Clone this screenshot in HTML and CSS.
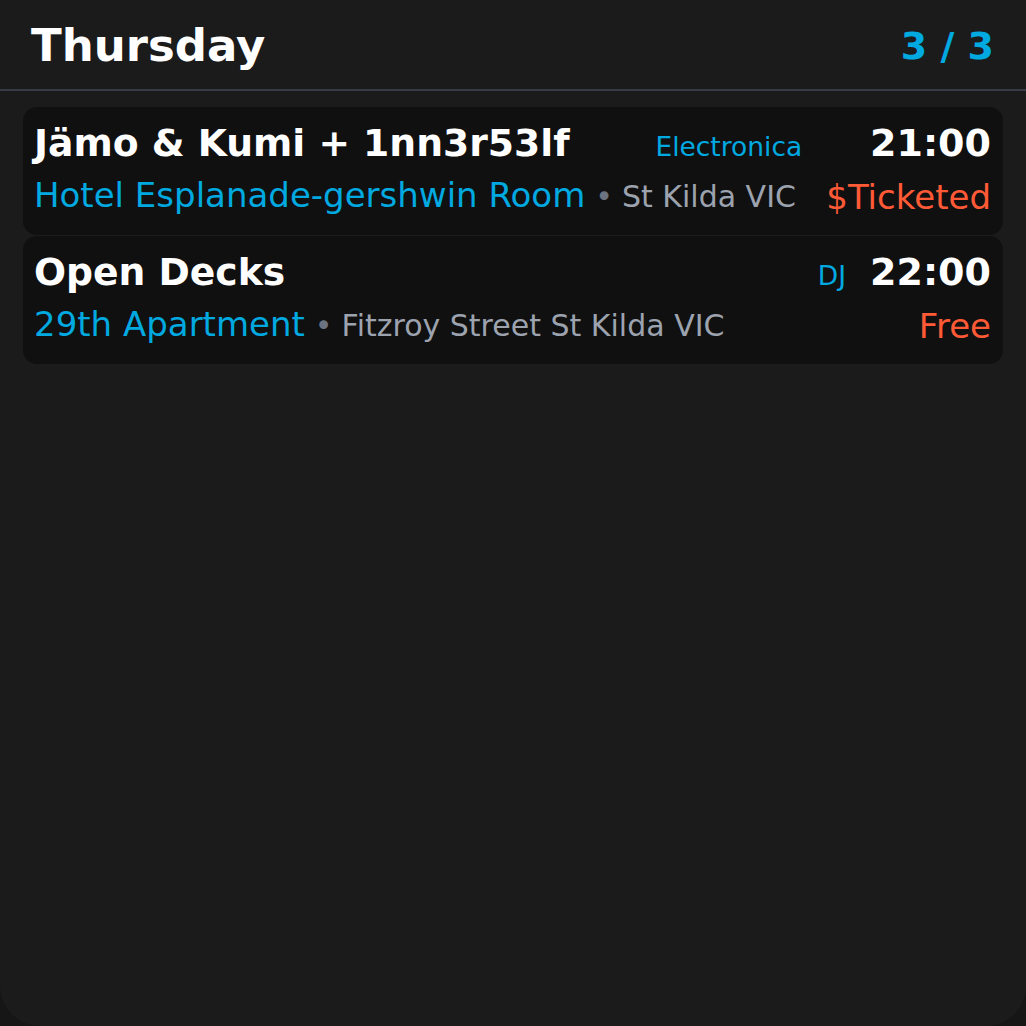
FILE: index.html
```html
<!DOCTYPE html>
<html lang="en">
<head>
<meta charset="utf-8">
<title>Thursday</title>
<link rel="stylesheet" href="styles.css">
</head>
<body>
<div class="panel">
  <header class="header">
    <h1 class="day">Thursday</h1>
    <div class="count">3 / 3</div>
  </header>
  <div class="list">
    <div class="card">
      <div class="main">
        <div class="row-top">
          <span class="title">Jämo &amp; Kumi + 1nn3r53lf</span>
          <span class="genre">Electronica</span>
        </div>
        <div class="row-bottom">
          <span class="venue">Hotel Esplanade-gershwin Room</span>
          <span class="dot">•</span>
          <span class="place">St Kilda VIC</span>
        </div>
      </div>
      <div class="side">
        <span class="time">21:00</span>
        <span class="price">$Ticketed</span>
      </div>
    </div>
    <div class="card">
      <div class="main">
        <div class="row-top">
          <span class="title">Open Decks</span>
          <span class="genre">DJ</span>
        </div>
        <div class="row-bottom">
          <span class="venue">29th Apartment</span>
          <span class="dot">•</span>
          <span class="place">Fitzroy Street St Kilda VIC</span>
        </div>
      </div>
      <div class="side">
        <span class="time">22:00</span>
        <span class="price">Free</span>
      </div>
    </div>
  </div>
</div>
</body>
</html>
```

FILE: styles.css
```css
* { box-sizing: border-box; }
html, body {
  margin: 0;
  padding: 0;
  background: #161616;
}
body {
  font-family: "DejaVu Sans", "Liberation Sans", sans-serif;
  color: #ffffff;
}
.panel {
  width: 1026px;
  height: 1026px;
  background: #1b1b1b;
  border-radius: 0 0 40px 40px;
  overflow: hidden;
}
.header {
  height: 91px;
  display: flex;
  align-items: center;
  justify-content: space-between;
  padding: 2px 32px 0 31px;
  border-bottom: 2px solid #373b45;
}
.day {
  margin: 0;
  font-size: 45px;
  font-weight: 700;
  color: #ffffff;
}
.count {
  font-size: 38px;
  font-weight: 700;
  color: #00a9e0;
}
.list {
  padding: 16px 23px;
  display: flex;
  flex-direction: column;
  gap: 1px;
}
.card {
  background: #101010;
  border-radius: 14px;
  padding: 14px 12px 18px 11px;
  display: flex;
  gap: 24px;
}
.main {
  flex: 1;
  min-width: 0;
  display: flex;
  flex-direction: column;
}
.row-top {
  display: flex;
  justify-content: space-between;
  align-items: baseline;
}
.row-bottom {
  display: flex;
  align-items: baseline;
  margin-top: 10px;
  white-space: nowrap;
}
.title {
  font-size: 37.7px;
  font-weight: 700;
  color: #ffffff;
}
.genre {
  font-size: 26.5px;
  color: #00a9e0;
}
.venue {
  font-size: 34px;
  color: #00a9e0;
}
.dot {
  font-size: 30px;
  color: #6b7280;
  margin: 0 9px 0 10px;
}
.place {
  font-size: 30px;
  color: #9ca3af;
}
.side {
  display: flex;
  flex-direction: column;
  align-items: flex-end;
}
.time {
  font-size: 38px;
  font-weight: 700;
  color: #ffffff;
}
.price {
  font-size: 34px;
  color: #ff5a36;
  margin-top: 12px;
}
```
